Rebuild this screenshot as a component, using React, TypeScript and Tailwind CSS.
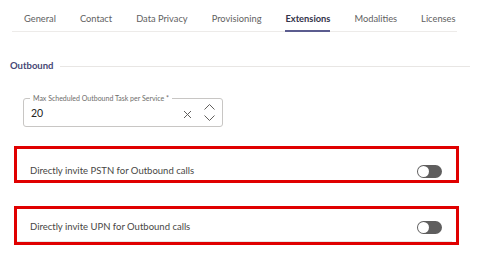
import React from 'react';

const tabs = ['General', 'Contact', 'Data Privacy', 'Provisioning', 'Extensions', 'Modalities', 'Licenses'];

function Toggle() {
  return (
    <div className="w-[25px] h-[13px] rounded-full bg-[#5f5e5e] flex items-center pl-[1px] shrink-0">
      <div className="w-[11px] h-[11px] rounded-full bg-white" />
    </div>
  );
}

function ToggleRow({ label, divider }: { label: string; divider?: boolean }) {
  return (
    <div className="mx-[14px] w-[445px] border-[3px] border-[#e00000]">
      <div
        className={
          divider
            ? 'flex items-center justify-between pl-[13px] pr-[10px] mr-[4px] pt-[9px] pb-[5px] border-b border-[#e8e6e4]'
            : 'flex items-center justify-between pl-[13px] pr-[14px] pt-[13px]'
        }
      >
        <span className="text-[9.5px] leading-[18px] text-[#484644]">{label}</span>
        <Toggle />
      </div>
    </div>
  );
}

export default function App() {
  return (
    <div className="w-[483px] h-[261px] bg-white overflow-hidden font-['Lato','Liberation_Sans',sans-serif]">
      <div className="ml-[12px] w-[445px] h-[32px] border-b border-[#edebe9] flex pl-[12px] gap-6">
        {tabs.map(t => (
          <div
            key={t}
            className={`relative h-full flex items-center pt-[7px] whitespace-nowrap text-[9.3px] ${t === 'Extensions' ? 'font-bold text-[#33344a]' : 'text-[#616161]'}`}
          >
            {t}
            {t === 'Extensions' && <div className="absolute left-0 right-0 bottom-[-1px] h-[2px] bg-[#5b5c8f]" />}
          </div>
        ))}
      </div>

      <div className="mt-[27px] h-[14px] flex items-center pl-[10px] pr-[13px]">
        <span className="text-[9.5px] font-bold text-[#464775]">Outbound</span>
        <div className="flex-1 h-px bg-[#e8e6e4] ml-[7px]" />
      </div>

      <div className="mt-[25px] ml-[23px] w-[200px] h-[29px] relative border border-[#c8c6c4] rounded-[3px] flex items-center pt-[3px] pl-[7px]">
        <span className="absolute top-[-6px] left-[6px] px-[3px] bg-white text-[7px] leading-[10px] text-[#6e6d6b]">
          Max Scheduled Outbound Task per Service *
        </span>
        <span className="text-[10.5px] text-[#252423] flex-1">20</span>
        <svg width="9" height="9" viewBox="0 0 9 9" className="mr-[12px]">
          <path d="M1 1 L8 8 M8 1 L1 8" stroke="#605e5c" strokeWidth="1" fill="none" />
        </svg>
        <div className="flex flex-col items-center gap-[5px] mr-[7px] -mt-[3px]">
          <svg width="11" height="6" viewBox="0 0 11 6">
            <path d="M0.5 5.5 L5.5 0.5 L10.5 5.5" stroke="#605e5c" strokeWidth="1" fill="none" />
          </svg>
          <svg width="11" height="6" viewBox="0 0 11 6">
            <path d="M0.5 0.5 L5.5 5.5 L10.5 0.5" stroke="#605e5c" strokeWidth="1" fill="none" />
          </svg>
        </div>
      </div>

      <div className="mt-[19px]">
        <ToggleRow label="Directly invite PSTN for Outbound calls" />
      </div>
      <div className="mt-[23px]">
        <ToggleRow label="Directly invite UPN for Outbound calls" divider />
      </div>
    </div>
  );
}
